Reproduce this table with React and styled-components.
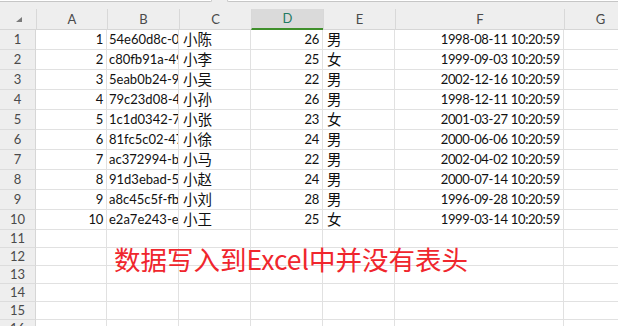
import React from 'react';
import styled, { createGlobalStyle } from 'styled-components';

const COLS = '36px 71px 72px 72px 72px 72px 169px 72px';

const GlobalStyle = createGlobalStyle`
  html, body {
    margin: 0;
    padding: 0;
    background: #fff;
    overflow: hidden;
  }
  body {
    font-family: Lato, "Noto Sans CJK SC", sans-serif;
  }
`;

const Sheet = styled.div`
  position: relative;
  width: 636px;
`;

const TopStrip = styled.div`
  display: flex;
  gap: 15px;
  height: 3px;
  background: #eeeeee;
`;

const NameBox = styled.div`
  width: 212px;
  height: 2px;
  background: #fff;
  border-bottom: 1px solid #c6c6c6;
  border-right: 1px solid #c6c6c6;
  border-bottom-right-radius: 3px;
  box-sizing: border-box;
`;

const FormulaBox = styled.div`
  flex: 1;
  height: 2px;
  background: #fff;
  border-bottom: 1px solid #c6c6c6;
  border-left: 1px solid #c6c6c6;
  border-bottom-left-radius: 3px;
  box-sizing: border-box;
`;

const HeaderRow = styled.div`
  display: grid;
  grid-template-columns: ${COLS};
  padding-top: 6px;
  background: #eeeeee;
`;

const Corner = styled.div`
  height: 21px;
  box-sizing: border-box;
  display: flex;
  justify-content: flex-end;
  align-items: flex-end;
  padding: 0 14px 7px 0;
  border-bottom: 1px solid #d6d6d6;
`;

const Triangle = styled.div`
  width: 0;
  height: 0;
  border-style: solid;
  border-width: 0 0 5px 6px;
  border-color: transparent transparent #7a7a7a transparent;
`;

const ColHead = styled.div`
  height: 21px;
  box-sizing: border-box;
  border-left: 1px solid #d8d8d8;
  border-bottom: ${(p) => (p.$active ? '2px solid #3f8f2b' : '1px solid #d6d6d6')};
  background: ${(p) => (p.$active ? '#dadada' : '#eeeeee')};
  color: ${(p) => (p.$active ? '#1f7a62' : '#4a4a4a')};
  font-size: 13px;
  line-height: ${(p) => (p.$active ? '19px' : '20px')};
  text-align: center;
  &:first-of-type {
    border-left: none;
  }
`;

const Row = styled.div`
  display: grid;
  grid-template-columns: ${COLS};
  height: ${(p) => p.$h}px;
`;

const RowHead = styled.div`
  background: #eeeeee;
  border-bottom: 1px solid #dcdcdc;
  border-right: 1px solid #d6d6d6;
  color: #4a4a4a;
  font-size: 13px;
  line-height: ${(p) => p.$h - 1}px;
  text-align: center;
`;

const Cell = styled.div`
  border-bottom: 1px solid #e1e1e1;
  border-right: 1px solid #e1e1e1;
  padding: 0 ${(p) => (p.$right ? '3px' : '2px')} 0 ${(p) => (p.$cjk ? '4px' : '2px')};
  overflow: hidden;
  white-space: nowrap;
  text-align: ${(p) => (p.$right ? 'right' : 'left')};
  color: #111;
  font-size: ${(p) => (p.$cjk ? '14.5px' : '13px')};
  letter-spacing: ${(p) => (p.$cjk || p.$text ? '0' : '-0.3px')};
  line-height: ${(p) => p.$h - 1}px;
`;

const Note = styled.div`
  position: absolute;
  left: 114px;
  top: 244px;
  color: #f0262d;
  font-family: "Noto Sans CJK SC", sans-serif;
  font-size: 26.5px;
  line-height: 30px;
  white-space: nowrap;
`;

const COLUMNS = ['A', 'B', 'C', 'D', 'E', 'F', 'G'];

const DATA = [
  [1, '54e60d8c-0f3a-4b1e', '小陈', 26, '男', '1998-08-11 10:20:59'],
  [2, 'c80fb91a-49d2-8c1f', '小李', 25, '女', '1999-09-03 10:20:59'],
  [3, '5eab0b24-9a7e-41c3', '小吴', 22, '男', '2002-12-16 10:20:59'],
  [4, '79c23d08-4e5b-9a10', '小孙', 26, '男', '1998-12-11 10:20:59'],
  [5, '1c1d0342-7d6f-4e2a', '小张', 23, '女', '2001-03-27 10:20:59'],
  [6, '81fc5c02-47ab-b3e9', '小徐', 24, '男', '2000-06-06 10:20:59'],
  [7, 'ac372994-bc08-4f17', '小马', 22, '男', '2002-04-02 10:20:59'],
  [8, '91d3ebad-5f21-4c8d', '小赵', 24, '男', '2000-07-14 10:20:59'],
  [9, 'a8c45c5f-fb3e-4d06', '小刘', 28, '男', '1996-09-28 10:20:59'],
  [10, 'e2a7e243-e9c1-47b5', '小王', 25, '女', '1999-03-14 10:20:59'],
];

const EMPTY_ROWS = [11, 12, 13, 14, 15, 16];

const App = () => (
  <>
    <GlobalStyle />
    <Sheet>
      <TopStrip>
        <NameBox />
        <FormulaBox />
      </TopStrip>
      <HeaderRow>
        <Corner>
          <Triangle />
        </Corner>
        {COLUMNS.map((c) => (
          <ColHead key={c} $active={c === 'D'}>
            {c}
          </ColHead>
        ))}
      </HeaderRow>

      {DATA.map(([n, id, name, age, sex, date]) => (
        <Row key={n} $h={20}>
          <RowHead $h={20}>{n}</RowHead>
          <Cell $h={20} $right>{n}</Cell>
          <Cell $h={20} $text>{id}</Cell>
          <Cell $h={20} $cjk>{name}</Cell>
          <Cell $h={20} $right>{age}</Cell>
          <Cell $h={20} $cjk>{sex}</Cell>
          <Cell $h={20} $right>{date}</Cell>
          <Cell $h={20} />
        </Row>
      ))}

      {EMPTY_ROWS.map((n) => (
        <Row key={n} $h={18}>
          <RowHead $h={18}>{n}</RowHead>
          {COLUMNS.map((c) => (
            <Cell key={c} $h={18} />
          ))}
        </Row>
      ))}

      <Note>数据写入到Excel中并没有表头</Note>
    </Sheet>
  </>
);

export default App;
